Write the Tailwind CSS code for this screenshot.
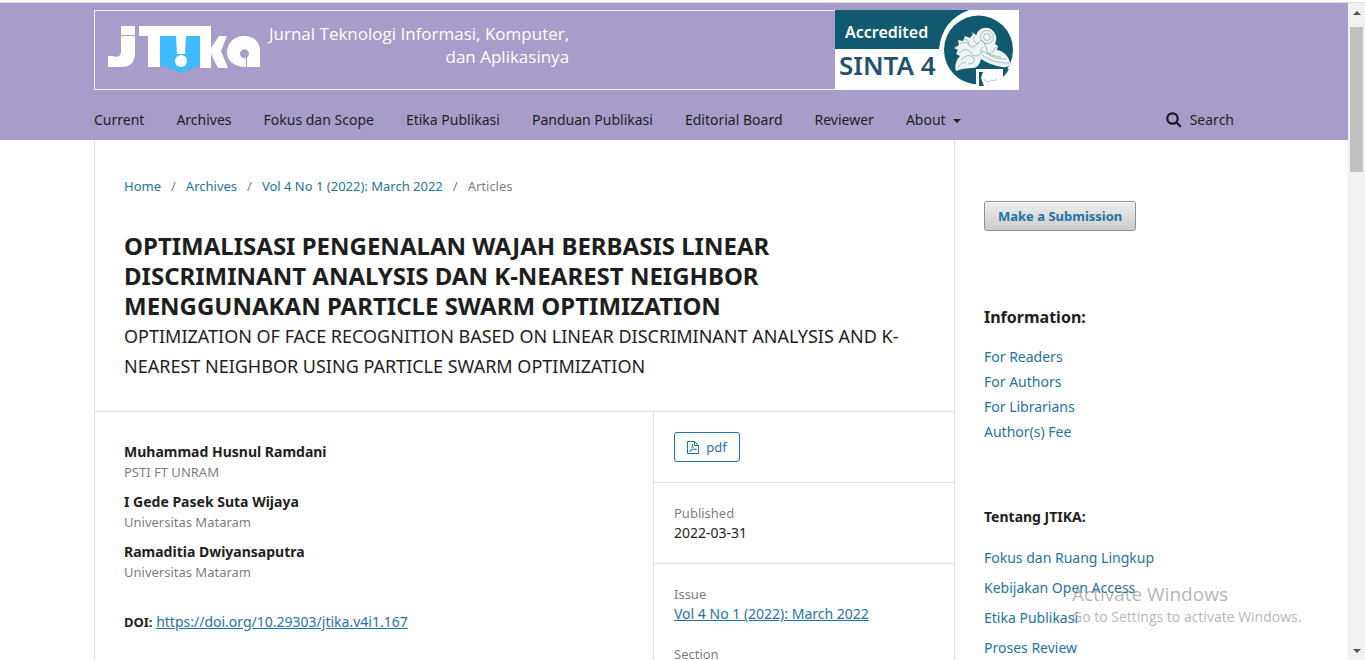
<!DOCTYPE html>
<html lang="id">
<head>
<meta charset="utf-8">
<meta name="viewport" content="width=device-width, initial-scale=1">
<title>JTIKA – Article</title>
<script src="https://cdn.jsdelivr.net/npm/@tailwindcss/browser@4"></script>
</head>
<body class="h-screen overflow-hidden bg-white font-['Noto_Sans',sans-serif] text-sm leading-5 text-[#1e1e1e]">
<div class="flex h-full flex-col">
<div class="h-[3px] shrink-0 border-b border-[#dcdcdc] bg-white"></div>
<div class="flex min-h-0 flex-1">
  <div class="flex min-w-0 flex-1 flex-col overflow-hidden">
    <header class="shrink-0 bg-[#a89ccb]">
      <div class="mx-auto max-w-[1160px] pt-[7px]">
        <a href="#" aria-label="JTIKA" class="flex h-20 w-[925px] text-white">
          <span class="flex flex-1 items-start border border-r-0 border-[#f3f0f8]">
            <svg class="ml-3 mt-3 h-[52px] w-[156px] shrink-0" viewBox="0 0 156 52" fill="#fff" aria-hidden="true">
              <path d="M14 3h14v9H14zM14 13h14v17q0 14-14 14H1V33h4q9 3 9-5z"/>
              <path fill="#3fbbff" d="M53 13h41v29l-20 8-21-8z"/>
              <path d="M32 3h72v42H93V13H53v31H41V13h-9z"/>
              <path d="M69 13h10l-1 18h-8z"/><circle cx="74" cy="38" r="6"/>
              <path d="M104 25l8-12h8l-6 15 7 17h-10l-7-14z"/>
              <path fill-rule="evenodd" d="M137 13c11 0 16 7 16 15v16h-13v-9.500a4.500 4.500 0 1 0-1 .5v9c-13 0-19-7-19-15s6-16 17-16z"/>
            </svg>
            <span class="ml-[6px] mt-[11px] text-right font-['Open_Sans',sans-serif] text-[17px] leading-[23px]">Jurnal Teknologi Informasi, Komputer,<br>dan Aplikasinya</span>
          </span>
          <svg class="h-20 w-[184px] shrink-0" viewBox="0 0 184 80" role="img" aria-label="Accredited SINTA 4">
            <path fill="#fff" d="M0 0h184v80H0z"/>
            <path fill="#11596f" d="M0 0h134Q107 10 104 39H0z"/>
            <text x="10" y="28" fill="#fff" font-family="Noto Sans" font-size="16" font-weight="600">Accredited</text>
            <text x="4" y="65" fill="#24526e" font-family="Noto Sans" font-size="26" font-weight="600">SINTA 4</text>
            <circle cx="143.500" cy="40" r="34.500" fill="#11596f"/>
            <path fill="#fff" d="M141 59h43v21h-30q-8-2-13-1z"/>
            <path fill="#11596f" d="M160 59h14q-4 8-12 12z"/>
            <path fill="#fff" d="M152 59h16v14h-16z"/>
            <path fill="#eef3f3" d="M121 61c-2-6 1-12 4-15l-4-2 2-4-4-2 5-3-1-5 5 1 2-5 5 2 3-4 4 2 0-3c3-6 12-7 16-2 4 4 4 9 2 13l3 2-1 4c7 1 11 6 13 12q1 6-8 5-12-2-21-8-2 10-10 9l-9 1z"/>
            <path fill="#f4f7f7" d="M137 22l4 3 3-3v5h-5z"/>
            <g fill="none" stroke="#8aa5ad" stroke-width="0.700">
              <circle cx="152" cy="27" r="6.500"/><circle cx="152" cy="27" r="3.500"/>
              <path d="M125 34q5-4 9 1t9-2 8 5 10-1M124 43q7-7 12 0t12-2q9 6 18 6M126 50q7-8 13-2 2 6-6 6M147 45q10 8 27 8M151 43q10 7 21 6M130 29q4 1 4 6M139 27q-1 6 5 7M148 37q-4 3-1 6M123 58q3-7 8-5"/>
            </g>
            <path fill="#11596f" d="M144 62h4l-2 6 3 8h-5z"/>
            <path fill="none" stroke="#b5c8cd" d="M149 69q3 5 8 1 3 2 5-1"/>
          </svg>
        </a>
        <div class="flex items-center justify-between pr-5 pb-[10px] pt-5">
          <nav aria-label="Menu utama" class="flex gap-8">
            <a href="#">Current</a><a href="#">Archives</a><a href="#">Fokus dan Scope</a><a href="#">Etika Publikasi</a><a href="#">Panduan Publikasi</a><a href="#">Editorial Board</a><a href="#">Reviewer</a>
            <a href="#" class="flex items-center gap-[7px]">About <span class="mt-0.5 border-x-4 border-t-4 border-x-transparent border-t-[#1e1e1e]"></span></a>
          </nav>
          <a href="#" class="flex items-center gap-2">
            <svg class="size-4" viewBox="0 0 16 16" fill="none" stroke="#1e1728" stroke-width="2.200" aria-hidden="true"><circle cx="6.500" cy="6.500" r="5.200"/><path d="M10.300 10.300l4.500 4.500"/></svg>Search
          </a>
        </div>
      </div>
    </header>

    <div class="mx-auto flex min-h-0 w-full max-w-[1160px] flex-1">
      <main class="flex w-[861px] shrink-0 flex-col border-x border-[#ddd]">
        <div class="px-[29px] pt-9 pb-[30px]">
          <nav aria-label="Breadcrumb" class="flex gap-[10px] text-[13px] text-black/55">
            <a href="#" class="text-[#1f73a3]">Home</a><span>/</span><a href="#" class="text-[#1f73a3]">Archives</a><span>/</span><a href="#" class="text-[#1f73a3]">Vol 4 No 1 (2022): March 2022</a><span>/</span><span>Articles</span>
          </nav>
          <h1 class="mt-[35px] max-w-[700px] text-2xl font-bold leading-[30px]">OPTIMALISASI PENGENALAN WAJAH BERBASIS LINEAR DISCRIMINANT ANALYSIS DAN K-NEAREST NEIGHBOR MENGGUNAKAN PARTICLE SWARM OPTIMIZATION</h1>
          <h2 class="text-lg leading-[30px]">OPTIMIZATION OF FACE RECOGNITION BASED ON LINEAR DISCRIMINANT ANALYSIS AND K-NEAREST NEIGHBOR USING PARTICLE SWARM OPTIMIZATION</h2>
        </div>
        <div class="flex min-h-0 flex-1 border-t border-[#ddd]">
          <section class="flex-1 px-[29px] pt-[30px]">
            <ul class="flex flex-col gap-[10px]">
              <li><strong class="block">Muhammad Husnul Ramdani</strong><span class="block text-[13px] text-black/55">PSTI FT UNRAM</span></li>
              <li><strong class="block">I Gede Pasek Suta Wijaya</strong><span class="block text-[13px] text-black/55">Universitas Mataram</span></li>
              <li><strong class="block">Ramaditia Dwiyansaputra</strong><span class="block text-[13px] text-black/55">Universitas Mataram</span></li>
            </ul>
            <p class="mt-[30px]"><strong class="text-[13px]">DOI:</strong> <a href="#" class="text-[#1f73a3] underline">https://doi.org/10.29303/jtika.v4i1.167</a></p>
          </section>
          <section class="w-[301px] shrink-0 overflow-hidden border-l border-[#ddd]">
            <div class="border-b border-[#ddd] px-5 py-5">
              <a href="#" class="flex h-[30px] w-[66px] items-center justify-center gap-[7px] rounded-[3px] border border-[#1f73a3] text-[13px] text-[#1f73a3]">
                <svg class="h-[13px] w-3" viewBox="0 0 12 13" fill="none" stroke="currentColor" aria-hidden="true"><path d="M.5.5h7l4 4v8H.5zM7.500.5v4h4"/><path stroke-width=".8" d="M2.500 10.500q3-2 3-7.500 0 5 4 5.500-4-.5-7 2"/></svg>pdf
              </a>
            </div>
            <div class="border-b border-[#ddd] px-5 py-5"><div class="text-[13px] text-black/55">Published</div><div>2022-03-31</div></div>
            <div class="px-5 py-5"><div class="text-[13px] text-black/55">Issue</div><a href="#" class="block text-[#1f73a3] underline">Vol 4 No 1 (2022): March 2022</a><div class="mt-5 text-[13px] text-black/55">Section</div></div>
          </section>
        </div>
      </main>
      <aside class="min-w-0 flex-1 overflow-hidden px-[29px] pt-[61px]">
        <button type="button" class="block h-[30px] rounded-[3px] border border-[#8f8f8f] bg-linear-to-b from-[#eee] to-[#ccc] px-[13px] text-[13px] font-bold text-[#1f73a3] shadow-[inset_0_1px_0_#fff]">Make a Submission</button>
        <h2 class="mt-[76px] text-base font-bold leading-5">Information:</h2>
        <ul class="mt-5 flex flex-col gap-[5px] text-[#1f73a3]">
          <li><a href="#">For Readers</a></li><li><a href="#">For Authors</a></li><li><a href="#">For Librarians</a></li><li><a href="#">Author(s) Fee</a></li>
        </ul>
        <h2 class="mt-[65px] font-bold">Tentang JTIKA:</h2>
        <ul class="mt-[21px] flex flex-col gap-[10px] text-[#1f73a3]">
          <li><a href="#">Fokus dan Ruang Lingkup</a></li><li><a href="#">Kebijakan Open Access</a></li><li><a href="#">Etika Publikasi</a></li><li><a href="#">Proses Review</a></li>
        </ul>
      </aside>
    </div>
  </div>
  <div class="flex w-[17px] shrink-0 flex-col items-center bg-[#f1f1f1]" aria-hidden="true">
    <span class="mt-2 border-x-4 border-b-4 border-x-transparent border-b-[#505050]"></span>
    <span class="mt-3 h-[145px] w-[13px] bg-[#c1c1c1]"></span>
    <span class="mt-auto mb-[7px] border-x-4 border-t-4 border-x-transparent border-t-[#505050]"></span>
  </div>
</div>
</div>
<div class="pointer-events-none absolute right-[57px] bottom-[33px] w-[236px] whitespace-nowrap font-['Open_Sans',sans-serif] text-[#8c8c8c]/65">
  <div class="text-[19px] leading-6">Activate Windows</div>
  <div class="text-[14px] leading-[21px]">Go to Settings to activate Windows.</div>
</div>
</body>
</html>
